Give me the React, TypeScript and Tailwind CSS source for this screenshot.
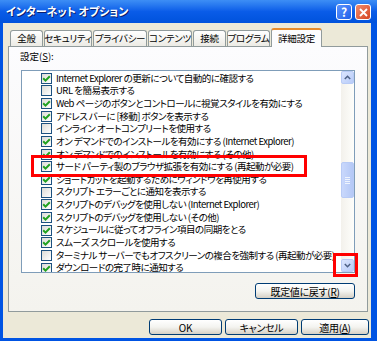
import React from "react";

type Row = { label: string; checked: boolean };

const rows: Row[] = [
  { label: "Internet Explorer の更新について自動的に確認する", checked: true },
  { label: "URL を簡易表示する", checked: false },
  { label: "Web ページのボタンとコントロールに視覚スタイルを有効にする", checked: true },
  { label: "アドレス バーに [移動] ボタンを表示する", checked: true },
  { label: "インライン オートコンプリートを使用する", checked: false },
  { label: "オン デマンドでのインストールを有効にする (Internet Explorer)", checked: true },
  { label: "オン デマンドでのインストールを有効にする (その他)", checked: true },
  { label: "サード パーティ製のブラウザ拡張を有効にする (再起動が必要)", checked: true },
  { label: "ショートカットを起動するためにウィンドウを再使用する", checked: true },
  { label: "スクリプト エラーごとに通知を表示する", checked: false },
  { label: "スクリプトのデバッグを使用しない (Internet Explorer)", checked: true },
  { label: "スクリプトのデバッグを使用しない (その他)", checked: true },
  { label: "スケジュールに従ってオフライン項目の同期をとる", checked: true },
  { label: "スムーズ スクロールを使用する", checked: true },
  { label: "ターミナル サーバーでもオフスクリーンの複合を強制する (再起動が必要)", checked: false },
  { label: "ダウンロードの完了時に通知する", checked: true },
];

const tabs = [
  { label: "全般", w: "w-[33px]" },
  { label: "セキュリティ", w: "w-[48px]" },
  { label: "プライバシー", w: "w-[54px]" },
  { label: "コンテンツ", w: "w-[44px]" },
  { label: "接続", w: "w-[33px]" },
  { label: "プログラム", w: "w-[43px]" },
];

function CheckBox({ checked }: { checked: boolean }) {
  return (
    <div className="w-[11px] h-[11px] shrink-0 border border-[#1c5180] bg-gradient-to-br from-[#dcdcd7] to-[#ffffff] flex items-center justify-center">
      {checked && (
        <svg width="9" height="9" viewBox="0 0 9 9">
          <path d="M1.2 4.3 L3.5 6.6 L7.8 2.2" fill="none" stroke="#21a121" strokeWidth="2" />
        </svg>
      )}
    </div>
  );
}

function XpButton({ children, className }: { children: React.ReactNode; className: string }) {
  return (
    <div
      className={`h-[16px] rounded-[3px] border border-[#003c74] bg-gradient-to-b from-[#ffffff] via-[#f4f4f0] to-[#d6d0c5] flex items-center justify-center whitespace-nowrap text-[10px] tracking-[-0.3px] text-black ${className}`}
    >
      {children}
    </div>
  );
}

function ScrollButton({ up }: { up: boolean }) {
  return (
    <div className="w-[13px] h-[13px] rounded-[2px] border border-[#b8cbf6] bg-gradient-to-br from-[#dbe5fd] to-[#b7cbf9] flex items-center justify-center">
      <svg width="7" height="5" viewBox="0 0 7 5">
        <path d={up ? "M0.8 4 L3.5 1.3 L6.2 4" : "M0.8 1 L3.5 3.7 L6.2 1"} fill="none" stroke="#4d6185" strokeWidth="1.5" />
      </svg>
    </div>
  );
}

export default function App() {
  return (
    <div
      className="relative w-[377px] h-[341px] overflow-hidden bg-[#0054e3] [font-feature-settings:'palt']"
      style={{ fontFamily: "'MS UI Gothic','Noto Sans CJK JP',sans-serif" }}
    >
      {/* title bar */}
      <div className="h-[23px] flex items-center px-[6px] bg-gradient-to-b from-[#3d8ef5] via-[#0a5ce8] to-[#0052dc]">
        <span className="text-white font-bold text-[11px] [text-shadow:1px_1px_0_#0a1e6e] flex-1">
          インターネット オプション
        </span>
        <div className="flex gap-[3px] mt-[1px]">
          <div className="w-[16px] h-[16px] rounded-[3px] border border-white bg-gradient-to-br from-[#5b93ff] to-[#1f5ee8] flex items-center justify-center text-white text-[12px] font-bold leading-none">
            ?
          </div>
          <div className="w-[16px] h-[16px] rounded-[3px] border border-white bg-gradient-to-br from-[#f08a6c] to-[#d5421c] flex items-center justify-center">
            <svg width="9" height="9" viewBox="0 0 9 9">
              <path d="M1 1 L8 8 M8 1 L1 8" stroke="white" strokeWidth="1.8" />
            </svg>
          </div>
        </div>
      </div>

      {/* body */}
      <div className="ml-[3px] mr-[6px] h-[315px] bg-[#ece9d8] flex flex-col">
        {/* tabs */}
        <div className="flex items-end gap-px pl-[7px] pt-[4px] h-[23px] relative z-10">
          {tabs.map((t) => (
            <div
              key={t.label}
              className={`${t.w} h-[16px] border border-b-0 border-[#919b9c] rounded-t-[3px] bg-gradient-to-b from-[#ffffff] to-[#ecebe5] text-[9.5px] tracking-[-0.3px] whitespace-nowrap text-black flex items-center justify-center`}
            >
              {t.label}
            </div>
          ))}
          <div className="w-[51px] h-[19px] -mb-px border border-b-0 border-[#919b9c] border-t-[#e68b2c] border-t-2 rounded-t-[3px] bg-[#fcfcfe] text-[9.5px] tracking-[-0.3px] whitespace-nowrap text-black flex items-center justify-center">
            詳細設定
          </div>
        </div>

        {/* panel */}
        <div className="ml-[5px] mr-[3px] h-[266px] border border-[#919b9c] bg-gradient-to-b from-[#fcfcfe] to-[#f4f3ee] flex flex-col">
          <div className="pl-[11px] pt-[3px] h-[23px] text-[9.5px] text-black leading-[12px]">
            設定(<span className="underline">S</span>):
          </div>
          <div className="ml-[12px] mr-[12px] h-[203px] border border-[#7f9db9] bg-white flex overflow-hidden">
            <div className="flex-1 pt-px overflow-hidden">
              {rows.map((r) => (
                <div key={r.label} className="h-[12.67px] flex items-center pl-[19px] whitespace-nowrap">
                  <CheckBox checked={r.checked} />
                  <span className="ml-[4px] text-[9.5px] tracking-[-0.5px] text-black leading-none">{r.label}</span>
                </div>
              ))}
            </div>
            <div className="w-[13px] shrink-0 bg-gradient-to-r from-[#f3f1ec] to-[#fefefb] flex flex-col">
              <ScrollButton up />
              <div className="h-[78px]" />
              <div className="h-[36px] rounded-[2px] border border-[#b8cbf6] bg-gradient-to-r from-[#c9d8fc] to-[#b4c8f6] flex flex-col items-center justify-center gap-px">
                <div className="w-[5px] h-px bg-[#eef4fe]" />
                <div className="w-[5px] h-px bg-[#eef4fe]" />
                <div className="w-[5px] h-px bg-[#eef4fe]" />
                <div className="w-[5px] h-px bg-[#eef4fe]" />
              </div>
              <div className="flex-1" />
              <ScrollButton up={false} />
            </div>
          </div>
          <div className="flex justify-end mr-[12px] mt-[10px]">
            <XpButton className="w-[100px]">
              既定値に戻す(<span className="underline">R</span>)
            </XpButton>
          </div>
        </div>

        {/* dialog buttons */}
        <div className="flex justify-end gap-[3px] pr-[2px] mt-[7px]">
          <XpButton className="w-[73px]">OK</XpButton>
          <XpButton className="w-[73px]">キャンセル</XpButton>
          <XpButton className="w-[68px]">
            適用(<span className="underline">A</span>)
          </XpButton>
        </div>
      </div>

      {/* highlight boxes */}
      <div className="absolute left-[31px] top-[155px] w-[276px] h-[22px] border-[3px] border-[#ff0000]" />
      <div className="absolute left-[333px] top-[253px] w-[25px] h-[24px] border-[3px] border-[#ff0000]" />
    </div>
  );
}
